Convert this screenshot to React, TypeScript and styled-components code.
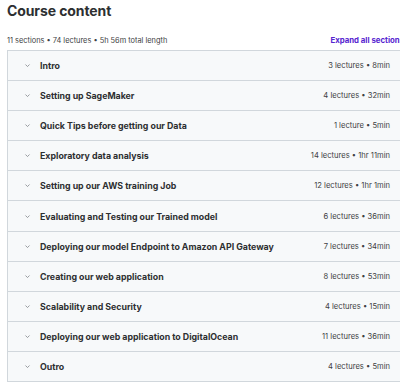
import React from 'react';
import styled, { createGlobalStyle } from 'styled-components';

const GlobalStyle = createGlobalStyle`
    html, body {
        margin: 0;
        padding: 0;
        background: #ffffff;
        overflow: hidden;
    }
    body {
        font-family: Inter, "Noto Sans", "Liberation Sans", sans-serif;
        color: #2d2f31;
    }
`;

const Host = styled.div`
    width: 397px;
    padding: 0 0 0 7px;
    display: flex;
    flex-direction: column;
`;

const Title = styled.h2`
    margin: 0;
    padding-top: 2px;
    font-size: 14px;
    line-height: 18px;
    font-weight: 700;
    letter-spacing: -0.1px;
`;

const Summary = styled.div`
    display: flex;
    justify-content: space-between;
    align-items: center;
    margin-top: 13px;
    height: 14px;
    margin-bottom: 3px;
`;

const Meta = styled.span`
    font-size: 7.4px;
    color: #3e4143;
`;

const ExpandLink = styled.button`
    border: none;
    background: none;
    padding: 0;
    font-family: inherit;
    font-size: 7.8px;
    font-weight: 700;
    color: #5624d0;
    white-space: nowrap;
    cursor: pointer;
`;

const Sections = styled.div`
    display: flex;
    flex-direction: column;
    border: 1px solid #d1d7dc;
    border-right: none;
`;

const SectionRow = styled.div<{ $last?: boolean }>`
    display: flex;
    align-items: center;
    height: 29.1px;
    padding: 0 14px 0 16px;
    background: #f7f9fa;
    border-bottom: ${(p) => (p.$last ? 'none' : '1px solid #d1d7dc')};
`;

const Chevron = styled.svg`
    width: 7px;
    height: 7px;
    flex-shrink: 0;
    color: #7b8085;
`;

const SectionTitle = styled.span`
    flex: 1;
    margin-left: 9px;
    font-size: 8.8px;
    font-weight: 700;
    color: #2d2f31;
    white-space: nowrap;
`;

const SectionMeta = styled.span`
    font-size: 7.6px;
    color: #3e4143;
    white-space: nowrap;
`;

const sections = [
    { title: 'Intro', meta: '3 lectures • 8min' },
    { title: 'Setting up SageMaker', meta: '4 lectures • 32min' },
    { title: 'Quick Tips before getting our Data', meta: '1 lecture • 5min' },
    { title: 'Exploratory data analysis', meta: '14 lectures • 1hr 11min' },
    { title: 'Setting up our AWS training Job', meta: '12 lectures • 1hr 1min' },
    { title: 'Evaluating and Testing our Trained model', meta: '6 lectures • 36min' },
    { title: 'Deploying our model Endpoint to Amazon API Gateway', meta: '7 lectures • 34min' },
    { title: 'Creating our web application', meta: '8 lectures • 53min' },
    { title: 'Scalability and Security', meta: '4 lectures • 15min' },
    { title: 'Deploying our web application to DigitalOcean', meta: '11 lectures • 36min' },
    { title: 'Outro', meta: '4 lectures • 5min' },
];

const ChevronDown = () => (
    <Chevron viewBox="0 0 10 10" fill="none">
        <path d="M2.5 4 L5 6.5 L7.5 4" stroke="currentColor" strokeWidth="1.1" strokeLinecap="round" strokeLinejoin="round" />
    </Chevron>
);

export default function App() {
    return (
        <>
            <GlobalStyle />
            <Host>
                <Title>Course content</Title>
                <Summary>
                    <Meta>11 sections • 74 lectures • 5h 56m total length</Meta>
                    <ExpandLink>Expand all sections</ExpandLink>
                </Summary>
                <Sections>
                    {sections.map((s, i) => (
                        <SectionRow key={s.title} $last={i === sections.length - 1}>
                            <ChevronDown />
                            <SectionTitle>{s.title}</SectionTitle>
                            <SectionMeta>{s.meta}</SectionMeta>
                        </SectionRow>
                    ))}
                </Sections>
            </Host>
        </>
    );
}
